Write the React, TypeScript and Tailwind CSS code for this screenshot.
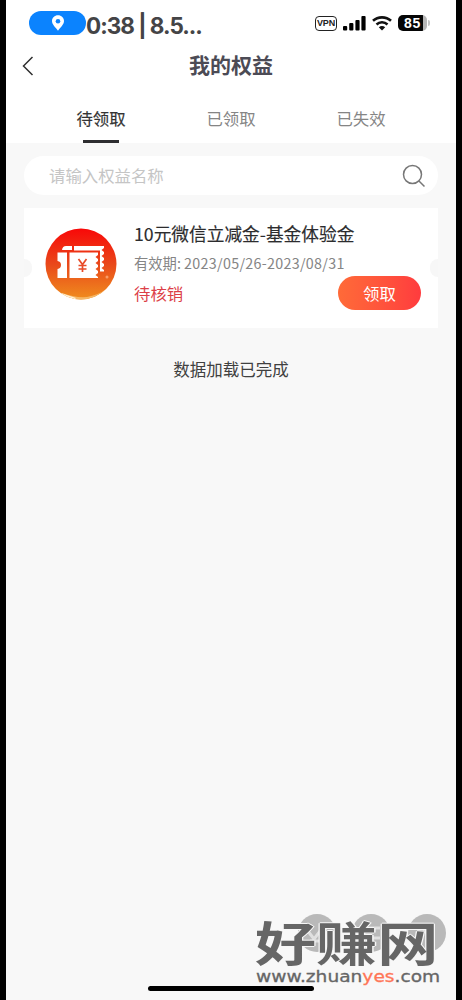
import React from "react";

const tabs = [
  { label: "待领取", active: true },
  { label: "已领取", active: false },
  { label: "已失效", active: false },
];

function StatusBar() {
  return (
    <div className="flex h-[46px] items-center pl-[23px] pr-[26px]">
      <div className="flex h-6 w-[57px] items-center justify-center rounded-full bg-[#0b83fe]">
        <svg width="14" height="16" viewBox="0 0 14 16" className="block">
          <path d="M7 0.3C3.6 .3 1 2.8 1 6.1C1 9.6 4.2 12 7 15.8C9.800 12 13 9.600 13 6.100C13 2.800 10.400 .300 7 .300Z" fill="white" />
          <circle cx="7" cy="6.200" r="2.300" fill="#0b83fe" />
        </svg>
      </div>
      <span className="mt-[6px] whitespace-nowrap font-['Inter'] text-[22.5px] leading-6 font-bold tracking-[-1px] text-[#444446]">0:38 | 8.5...</span>
      <div className="ml-auto flex items-center">
        <div className="flex h-[15px] w-[22px] items-center justify-center rounded-[4px] border-[1.5px] border-[#222]">
          <span className="font-['Liberation_Sans'] text-[9px] leading-none font-bold tracking-[-0.2px] text-[#222]">VPN</span>
        </div>
        <svg width="23" height="15" viewBox="0 0 23 15" className="ml-[6px]">
          <rect x="0" y="10" width="4.200" height="4.500" rx="1" />
          <rect x="6.200" y="7" width="4.200" height="7.500" rx="1" />
          <rect x="12.400" y="4" width="4.200" height="10.500" rx="1" />
          <rect x="18.400" y="0" width="4.200" height="14.500" rx="1" />
        </svg>
        <svg width="20" height="15" viewBox="0 0 20 15" className="ml-[6px]" fill="none" stroke="#111">
          <path d="M1 4.800C6 .200 14 .200 19 4.800" strokeWidth="2.600" />
          <path d="M4.500 8.500C7.500 5.600 12.500 5.600 15.500 8.500" strokeWidth="2.500" />
          <path d="M6.800 11.200Q10 8.800 13.200 11.200L10 14.500Z" fill="#111" stroke="none" />
        </svg>
        <div className="ml-[6px] flex h-[16px] w-[29px] items-center justify-center rounded-[5px] bg-[linear-gradient(90deg,#050505_86%,#b6b6b6_86%)]">
          <span className="font-['Liberation_Sans'] text-[14px] leading-none font-bold tracking-[0.8px] text-white">85</span>
        </div>
        <div className="ml-px h-1.5 w-[2px] rounded-r-full bg-[#c5c5c5]" />
      </div>
    </div>
  );
}

function CouponIcon() {
  return (
    <svg width="72" height="72" viewBox="0 0 72 72" className="block">
      <defs>
        <linearGradient id="disc" x1="0" y1="0" x2="0" y2="1">
          <stop offset="0" stopColor="#f80808" />
          <stop offset=".5" stopColor="#e9481a" />
          <stop offset="1" stopColor="#f08d1e" />
        </linearGradient>
        <clipPath id="round"><circle cx="36" cy="36" r="35.500" /></clipPath>
      </defs>
      <circle cx="36" cy="36" r="35.500" fill="url(#disc)" />
      <g clipPath="url(#round)">
        <path d="M17 65Q30 70 42 69Q53 67 60 62L52 74H20Z" fill="#f6b765" />
        <path d="M16 65L31 70L28 73L20 71Z" fill="#fff2d8" />
      </g>
      <g fill="white">
        <path d="M17 22Q17.500 18 21 18H27V22H17Z" />
        <path d="M29 18H59V20L56.500 22L59 24V26L56.500 28L59 30V32L56.500 34L59 36V38L56.500 40L59 42V43.500H55V22.500H29Z" />
        <path d="M12.500 24.500H22V50H12.500V41Q16 40.500 16 37Q16 33.500 12.500 33Z" />
        <path d="M24.500 24.500H53V27L50.500 29L53 31V33L50.500 35L53 37V39L50.500 41L53 43V45L50.500 47L53 49V50H24.500Z" />
      </g>
      <path d="M33.500 31L37.500 36.500L41.500 31M33.500 37.500H41.500M33.500 41H41.500M37.500 37V44" fill="none" stroke="#e84b28" strokeWidth="1.700" />
      <circle cx="62" cy="49" r="1.500" fill="#ffb58a" opacity=".7" />
    </svg>
  );
}

function CouponCard() {
  return (
    <article className="relative mx-[18px] mt-[13px] flex h-[120px] bg-white pl-[21px]">
      <div className="absolute top-[51px] left-0 h-[18px] w-[8px] rounded-r-full bg-[#f7f7f7]" />
      <div className="absolute top-[51px] right-0 h-[18px] w-[8px] rounded-l-full bg-[#f7f7f7]" />
      <div className="mt-[20px]"><CouponIcon /></div>
      <div className="ml-[17px] flex-1">
        <h2 className="mt-[13px] whitespace-nowrap text-[17.7px] leading-[24px] font-normal text-[#2c2c2e] [-webkit-text-stroke:0.15px]">10元微信立减金-基金体验金</h2>
        <p className="mt-[8px] whitespace-nowrap text-[14.3px] leading-5 text-[#858585]">有效期: <span className="tracking-[0.3px]">2023/05/26-2023/08/31</span></p>
        <div className="mt-[3px] flex items-start">
          <span className="mt-[5px] text-[16.4px] leading-6 text-[#dc3f48]">待核销</span>
          <button className="mr-[17px] ml-auto h-[34px] w-[83px] rounded-full bg-gradient-to-r from-[#ff6a38] to-[#ff3b3e] text-[16.4px] leading-[34px] text-white">领取</button>
        </div>
      </div>
    </article>
  );
}

function Watermark() {
  return (
    <div className="absolute right-0 bottom-0 h-[90px] w-[206px] overflow-hidden">
      <svg width="206" height="90" viewBox="0 0 206 90" className="absolute top-0 left-0">
        <g fill="#b9b9b9">
          <circle cx="67" cy="23" r="19" />
          <circle cx="121" cy="23" r="19" />
          <circle cx="177" cy="23" r="19" />
        </g>
        <path d="M54 16L64 29L74 16M60 31H76M115 18H130M115 28H130M170 15L184 31" fill="none" stroke="#e0e0e0" strokeWidth="3" />
      </svg>
      <div className="absolute top-[7px] left-[5px] origin-left scale-x-[1.3] whitespace-nowrap text-[47px] leading-[48px] font-bold text-[#666] [text-shadow:1px_0_#f7f7f7,-1px_0_#f7f7f7,0_1px_#f7f7f7,0_-1px_#f7f7f7]">好赚网</div>
      <div className="absolute top-[57px] left-[6px] origin-left scale-x-[1.2] whitespace-nowrap font-['DejaVu_Sans'] text-[15.5px] leading-5 text-[#666] [-webkit-text-stroke:0.3px]">www.zhuan<span className="text-[#ff7656]">yes</span>.com</div>
    </div>
  );
}

export default function App() {
  return (
    <div className="flex h-[1000px] w-[462px] overflow-hidden bg-black px-[6px] font-['Noto_Sans_CJK_SC','Liberation_Sans',sans-serif]">
      <main className="relative flex w-[450px] flex-col bg-[#f8f8f8]">
        <div className="bg-white">
          <StatusBar />
          <header className="relative flex h-[42px] items-center justify-center">
            <svg width="12" height="20" viewBox="0 0 12 20" className="absolute top-[10px] left-[16px]" fill="none" stroke="#303030" strokeWidth="1.500">
              <path d="M10.500 1L1.500 10L10.500 19" />
            </svg>
            <h1 className="-mt-[6px] text-[21px] leading-[42px] font-bold text-[#4c4b55]">我的权益</h1>
          </header>
          <nav className="flex h-[55px] px-[30px]">
            {tabs.map((tab) => (
              <div key={tab.label} className={tab.active ? "flex flex-1 flex-col items-center text-[#333]" : "flex flex-1 flex-col items-center text-[#858585]"}>
                <span className={tab.active ? "mt-[18px] text-[16.4px] leading-6 [-webkit-text-stroke:0.15px]" : "mt-[18px] text-[16.4px] leading-6"}>{tab.label}</span>
                {tab.active && <i className="mt-[10px] h-[3px] w-9 bg-[#2d2d30]" />}
              </div>
            ))}
          </nav>
        </div>
        <div className="mx-[18px] mt-[13px] flex h-[39px] items-center rounded-full bg-white pr-[12px] pl-[25px]">
          <span className="-mt-[2px] flex-1 text-[16.4px] leading-6 text-[#c5c5c5]">请输入权益名称</span>
          <svg width="24" height="24" viewBox="0 0 24 24" fill="none" stroke="#777" strokeWidth="1.500">
            <circle cx="10.500" cy="10.500" r="9" />
            <path d="M17 17L22.500 22.500" />
          </svg>
        </div>
        <CouponCard />
        <p className="mt-[29px] text-center text-[16.5px] leading-6 text-[#404040]">数据加载已完成</p>
        <Watermark />
        <div className="absolute bottom-[9px] left-[142px] h-[5px] w-[166px] rounded-full bg-black" />
      </main>
    </div>
  );
}
